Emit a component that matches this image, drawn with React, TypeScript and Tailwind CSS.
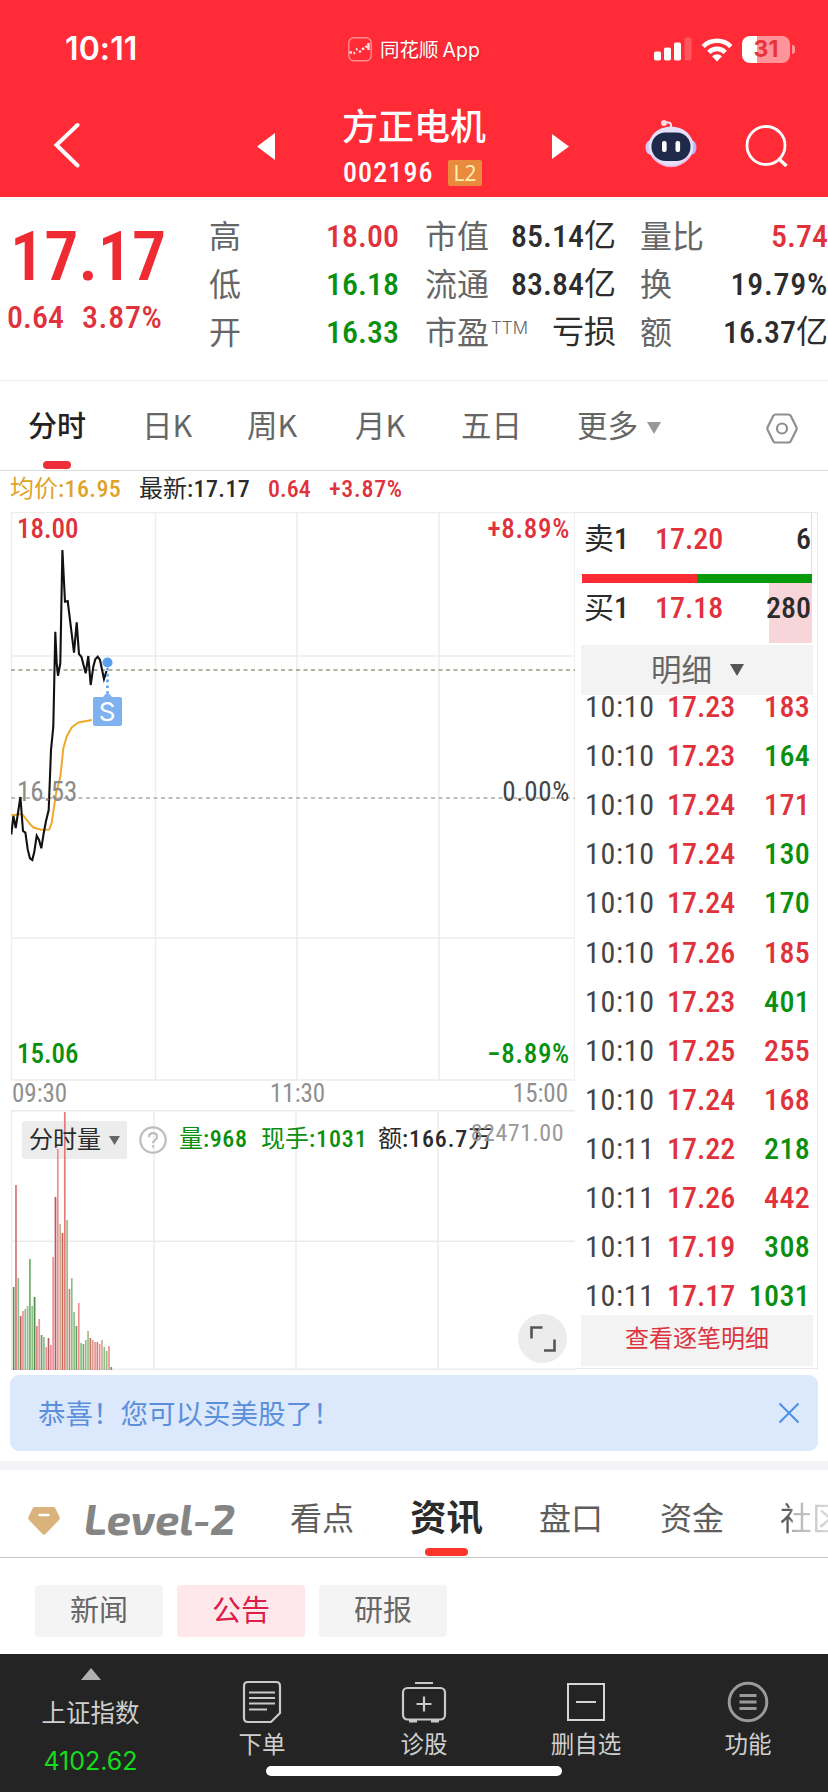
import React from 'react';
import { clsx } from 'clsx';

const RED = 'text-[#e0323c]';
const GREEN = 'text-[#0a8f0e]';

// narrow numerals used for every price / quantity, hanzi inside stay regular weight
function Num({ children, className }: { children: string; className?: string }) {
  return (
    <span
      className={clsx(
        "font-['Roboto','Noto_Sans_CJK_SC',sans-serif] whitespace-nowrap [font-stretch:86%]",
        !className?.includes('font-') && 'font-[470]',
        children.includes('%') && 'tracking-[0.7px]',
        className,
      )}
    >
      {children.split(/([\u4e00-\u9fa5]+)/).map((part, i) =>
        i % 2 ? (
          <span key={i} className="font-normal tracking-normal">
            {part}
          </span>
        ) : (
          part
        ),
      )}
    </span>
  );
}

const quoteRows = [
  [
    { label: '高', value: '18.00', tone: RED },
    { label: '低', value: '16.18', tone: GREEN },
    { label: '开', value: '16.33', tone: GREEN },
  ],
  [
    { label: '市值', value: '85.14亿', tone: 'text-[#2d2d2d]' },
    { label: '流通', value: '83.84亿', tone: 'text-[#2d2d2d]' },
    { label: '市盈', sup: 'TTM', value: '亏损', tone: 'text-[#2d2d2d]' },
  ],
  [
    { label: '量比', value: '5.74', tone: RED },
    { label: '换', value: '19.79%', tone: 'text-[#2d2d2d]' },
    { label: '额', value: '16.37亿', tone: 'text-[#2d2d2d]' },
  ],
];

const trades: [string, string, string, 'up' | 'down'][] = [
  ['10:10', '17.23', '183', 'up'],
  ['10:10', '17.23', '164', 'down'],
  ['10:10', '17.24', '171', 'up'],
  ['10:10', '17.24', '130', 'down'],
  ['10:10', '17.24', '170', 'down'],
  ['10:10', '17.26', '185', 'up'],
  ['10:10', '17.23', '401', 'down'],
  ['10:10', '17.25', '255', 'up'],
  ['10:10', '17.24', '168', 'up'],
  ['10:11', '17.22', '218', 'down'],
  ['10:11', '17.26', '442', 'up'],
  ['10:11', '17.19', '308', 'down'],
  ['10:11', '17.17', '1031', 'down'],
];

// [height, colour] per minute
const R = '#ee8f92';
const G = '#8cc088';
const volumes: [number, string][] = [
  [83, '#5d8f52'], [185, '#d9727a'], [92, G], [54, '#b0605c'], [59, R], [61, G], [64, G],
  [111, '#6fae6d'], [64, G], [73, '#4f8f4c'], [44, '#d98a80'], [51, R], [35, '#6f9a66'], [33, G], [23, R], [32, '#b95f72'],
  [25, R], [113, R], [173, '#c4545c'], [221, R], [146, '#c3b58f'], [137, '#c9635c'], [258, '#e07a7c'],
  [150, '#a9b583'], [81, '#c98474'], [92, G], [58, G], [44, '#6f9a66'], [67, R], [27, G], [26, '#6fae6d'],
  [30, G], [39, '#a9b98a'], [32, '#c07a6a'], [30, '#d0a088'], [28, R], [28, '#e07a7c'], [26, R],
  [30, '#c3b58f'], [23, G], [19, G], [24, R], [3, '#6f9a66'],
];

function StatusBar() {
  return (
    <div className="flex h-[98px] items-center pl-[65px] pr-[33px] text-white">
      <div className="w-[283px] font-['Inter',sans-serif] text-[32px] font-semibold tracking-[0.1px]">10:11</div>
      <div className="flex items-center">
        <svg width="24" height="25" viewBox="0 0 24 25" fill="none">
          <rect x="0.8" y="0.8" width="22.4" height="23" rx="5" stroke="#ff8c90" strokeWidth="1.4" />
          <path d="M1.500 15.500h2.500M5.500 16.500l1.500-1M8 12.500l1.500-.5M11 15l2-1M14 12.500l2-1.500M17.500 10.500l1.500-1.500M20.500 13V6" stroke="#ffe3e3" strokeWidth="2.400" />
        </svg>
        <span className="ml-2 font-['Noto_Sans_CJK_SC',sans-serif] text-[19.500px] leading-6 [text-shadow:1px_1px_2px_#a0202880]">
          同花顺<span className="ml-1 font-['Inter','Noto_Sans_CJK_SC',sans-serif]">App</span>
        </span>
      </div>
      <div className="ml-auto flex items-center">
        <svg width="38" height="24" viewBox="0 0 38 24" fill="#fff">
          <rect x="0" y="14.500" width="7" height="9" rx="1.800" />
          <rect x="10" y="10.500" width="7" height="13" rx="1.800" />
          <rect x="20" y="5.500" width="7" height="18" rx="1.800" />
          <rect x="30.500" y="0.500" width="7" height="23" rx="1.800" opacity="0.2" />
        </svg>
        <svg className="ml-[9px]" width="32" height="25" viewBox="0 0 32 25" fill="none" stroke="#fff">
          <path d="M2.200 9.500a19.500 19.500 0 0 1 27.600 0" strokeWidth="4.600" />
          <path d="M7.800 15.300a11.600 11.600 0 0 1 16.400 0" strokeWidth="4.600" />
          <path d="M16 24.500l-5-5.200a7.200 7.200 0 0 1 10 0z" fill="#fff" stroke="none" />
        </svg>
        <div className="ml-[9px] flex h-[27px] w-[48px] items-center justify-center rounded-[8px] bg-[linear-gradient(90deg,#fff_31%,#ff959a_31%)] font-['Inter',sans-serif] text-[23px] font-bold text-[#e8323c]">
          31
        </div>
        <div className="ml-[2px] h-[9px] w-[3px] rounded-r-full bg-[#ff959a]" />
      </div>
    </div>
  );
}

function Robot() {
  return (
    <svg width="52" height="50" viewBox="0 0 52 50">
      <path d="M26 10V6q0-2.500-3-2.500h-3" fill="none" stroke="#f3dff0" strokeWidth="2" />
      <circle cx="19" cy="4" r="3" fill="#ffd9dc" />
      <ellipse cx="5" cy="28.500" rx="4.500" ry="7" fill="#d9c8f4" />
      <ellipse cx="47" cy="28.500" rx="4.500" ry="7" fill="#b9b4f6" />
      <ellipse cx="26" cy="27.500" rx="22.500" ry="20" fill="#e6e1fb" />
      <path d="M8 38q8 9.500 18 9.500t18-9.500" fill="none" stroke="#f2b6dc" strokeWidth="1.500" />
      <rect x="6.500" y="13.500" width="39" height="28.500" rx="14" fill="#1f2a4b" />
      <rect x="17" y="22" width="4.600" height="11" rx="2" fill="#fff" />
      <rect x="30.500" y="22" width="4.600" height="11" rx="2" fill="#fff" />
    </svg>
  );
}

function NavBar() {
  return (
    <div className="flex h-[99px] items-start text-white">
      <svg className="ml-[53px] mt-[24px]" width="28" height="46" viewBox="0 0 28 46" fill="none">
        <path d="M24.500 3L3.500 23l21 20.500" stroke="#fff" strokeWidth="4" strokeLinecap="round" />
      </svg>
      <svg className="ml-[176px] mt-[35px]" width="18" height="27" viewBox="0 0 18 27">
        <path d="M18 0v27L0 13.500z" fill="#fff" />
      </svg>
      <div className="ml-[67px] w-[145px]">
        <div className="mt-[5px] whitespace-nowrap font-['Noto_Sans_CJK_SC',sans-serif] text-[36px] font-medium leading-[42px]">方正电机</div>
        <div className="mt-[14px] flex h-[28px] items-center">
          <Num className="ml-px text-[28px] leading-7 tracking-[1.100px]">002196</Num>
          <span className="ml-auto mr-[5px] flex h-[26px] w-[34px] items-center justify-center rounded-[2px] bg-[#e98a3c] font-['Noto_Sans',sans-serif] text-[21px] leading-none text-[#ffeeb0]">
            L2
          </span>
        </div>
      </div>
      <svg className="ml-[65px] mt-[36px]" width="17" height="25" viewBox="0 0 17 25">
        <path d="M0 0v25l17-12.500z" fill="#fff" />
      </svg>
      <div className="ml-[76px] mt-[21px]">
        <Robot />
      </div>
      <svg className="ml-[47px] mt-[26px]" width="46" height="44" viewBox="0 0 46 44" fill="none" stroke="#fff" strokeWidth="2.800">
        <circle cx="22" cy="21.500" r="19" />
        <path d="M34.500 34.500l8 7.500" strokeWidth="3.400" />
      </svg>
    </div>
  );
}

function Quote() {
  return (
    <section className="flex h-[184px] border-b border-[#ececec] pt-[15px]">
      <div className="w-[209px]">
        <Num className="ml-[10px] mt-[9px] block text-[68px] font-[650] leading-[72px] text-[#ee2b33]">17.17</Num>
        <div className={clsx('ml-[7px] mt-[5px] flex gap-[18px] text-[32px] leading-[38px]', RED)}>
          <Num>0.64</Num>
          <Num>3.87%</Num>
        </div>
      </div>
      {quoteRows.map((col, i) => (
        <div key={i} className={['w-[190px]', 'ml-[26px] w-[191px]', 'ml-[24px] w-[188px]'][i]}>
          {col.map((r) => (
            <div key={r.label} className="flex h-[48px] items-center justify-between font-['Noto_Sans_CJK_SC',sans-serif] text-[32px] leading-[48px] text-[#666]">
              <span className="mb-[5px] flex whitespace-nowrap">
                {r.label}
                {'sup' in r && <span className="ml-[2px] font-['Inter',sans-serif] text-[17px] font-light leading-[44px]">{r.sup}</span>}
              </span>
              <Num className={r.tone}>{r.value}</Num>
            </div>
          ))}
        </div>
      ))}
    </section>
  );
}

function PeriodTabs() {
  return (
    <div className="flex h-[90px] items-start border-b border-[#dcdcdc] pl-[28px] pt-[21px] font-['Noto_Sans_CJK_SC',sans-serif] text-[30.500px] leading-[44px] text-[#666]">
      <div className="flex w-[114px] flex-col items-start text-[29px] font-medium text-[#222]">
        分时
        <span className="ml-[15px] mt-[15px] h-[8px] w-[28px] rounded-full bg-[#ec2f38]" />
      </div>
      <span className="w-[105px]">日K</span>
      <span className="w-[108px]">周K</span>
      <span className="w-[106px]">月K</span>
      <span className="w-[116px]">五日</span>
      <span className="w-[70px]">更多</span>
      <svg className="mt-[20px]" width="14" height="12" viewBox="0 0 14 12">
        <path d="M0 0h14L7 12z" fill="#999" />
      </svg>
      <svg className="ml-[105px] mt-[11px]" width="32" height="31" viewBox="0 0 32 31" fill="none" stroke="#8f8f8f" strokeWidth="2.200">
        <path d="M9.500 1.500h13q1.500 0 2.200 1.300l5.600 11.200q.7 1.500 0 3l-5.600 11.200q-.7 1.300-2.200 1.300h-13q-1.500 0-2.200-1.300L1.700 17q-.7-1.500 0-3L7.300 2.800q.7-1.300 2.200-1.300z" />
        <circle cx="16" cy="15.500" r="5" />
      </svg>
    </div>
  );
}

function PriceChart() {
  return (
    <div className="relative h-[569px] text-[27px] leading-[30px]">
      <svg width="564" height="569" viewBox="11 512 564 569" fill="none">
        <g stroke="#ededed" strokeWidth="1.500">
          <path d="M11 512.500H575V1080H11.500V512.500M155.500 512V1080M297 512V1080M439 512V1080M11 656H575M11 938H575" />
        </g>
        <path d="M11 670H575" stroke="#9b9a88" strokeWidth="1.500" strokeDasharray="4 3.500" />
        <path d="M11 798H575" stroke="#ababab" strokeWidth="1.300" strokeDasharray="4 3.500" />
        <path
          d="M11.500 815l4 0 4.800-1 2.700 1 7 9 3.500 3.500 8 2.200 7.700-.2 2.500-6.500L56 793.500 60.300 777l3-28.500 3.400-12 5-9 6.600-5L92 720"
          stroke="#f0a92c"
          strokeWidth="2"
        />
        <path
          d="M11.300 834.500L13.400 816l2.300 12L20.400 797l2.600 34 2.400 1.700 2.300 16.700 2.300 9 2.300 1.600 2-8.300 2.400-16 2.300 4.300 2.300 8.300 2.400-15L46 821l2.700-11L51 750l2.300-23.300 2-95 1.400 31.600 1.300 12.400 2.300-12.400L62.400 550 65 601.700l2.700-.7L74 652.700l2.700-30.400L79 654l2.400 2.700 4.300 16.600 2.600-17.300 2.400 29 2.600-18.300 2-7.400 2.400-2.600 2.300 3.300L104 679l2.500-8"
          stroke="#111"
          strokeWidth="2.100"
        />
        <circle cx="107.500" cy="662.500" r="5" fill="#5b9fee" />
        <path d="M107.500 668v25" stroke="#5b9fee" strokeWidth="2.600" strokeDasharray="2.600 3.200" />
        <path d="M95 697h8l4.500-5 4.500 5h8q2 0 2 2v25q0 2-2 2H95q-2 0-2-2v-25q0-2 2-2z" fill="#7fb1f1" />
      </svg>
      <span className="absolute left-[82px] top-[185px] w-[28px] text-center font-['Inter',sans-serif] text-[26px] leading-[30px] text-white">S</span>
      <Num className={clsx('absolute left-[6px] top-[2px]', RED)}>18.00</Num>
      <Num className={clsx('absolute right-[5px] top-[2px]', RED)}>+8.89%</Num>
      <Num className="absolute left-[6px] top-[265px] font-normal text-[#8c8c8c]">16.53</Num>
      <Num className="absolute right-[5px] top-[265px] font-normal text-[#444]">0.00%</Num>
      <Num className={clsx('absolute left-[6px] top-[527px]', GREEN)}>15.06</Num>
      <Num className={clsx('absolute right-[5px] top-[527px]', GREEN)}>−8.89%</Num>
    </div>
  );
}

function VolumeChart() {
  return (
    <div className="relative h-[260px]">
      <svg width="564" height="260" viewBox="0 0 564 260" fill="none">
        <path d="M0 .8H564M.5 0V259.300H564M143 0V259M285 0V259M427 0V259M0 131.300H564" stroke="#ebebeb" strokeWidth="1.500" />
        <rect x="11" y="11" width="105" height="38" rx="3" fill="#ececec" />
        {volumes.map(([h, c], i) => (
          <rect key={i} x={1.8 + i * 2.325} y={260 - h} width="1.700" height={h} fill={c} />
        ))}
      </svg>
      <div className="absolute inset-x-0 top-[10px] flex h-[38px] items-center whitespace-nowrap font-['Noto_Sans_CJK_SC',sans-serif] text-[24px] leading-[38px]">
        <span className="ml-[18px] w-[73px] pb-[2px] text-[#2b2b2b]">分时量</span>
        <svg className="ml-[7px] mt-[2px]" width="11" height="9" viewBox="0 0 11 9">
          <path d="M0 0h11L5.500 9z" fill="#666" />
        </svg>
        <svg className="ml-[19px] mt-[2px]" width="28" height="28" viewBox="0 0 28 28" fill="none" stroke="#bdbdbd" strokeWidth="2.200">
          <circle cx="14" cy="14" r="12.700" />
          <path d="M10 11.200q0-4 4-4t4 3.700q0 2-2 3.200t-2 3.200M14 19.200v2.400" />
        </svg>
        <Num className={clsx('ml-[12px] w-[82px] tracking-[0.6px]', GREEN)}>量:968</Num>
        <Num className={clsx('w-[117px] tracking-[0.9px]', GREEN)}>现手:1031</Num>
        <Num className="tracking-[0.9px] text-[#2b2b2b]">额:166.7万</Num>
      </div>
      <Num className="absolute right-[11px] top-[8px] text-[24px] font-normal leading-[30px] tracking-[0.5px] text-[#999]">82471.00</Num>
      <div className="absolute right-[8px] top-[204px] flex size-[49px] items-center justify-center rounded-full bg-[#ececec]">
        <svg width="26" height="26" viewBox="0 0 26 26" fill="none" stroke="#555" strokeWidth="2.600">
          <path d="M1.500 12.500V1.500h11M14 24.500h10.500v-11" />
        </svg>
      </div>
    </div>
  );
}

function OrderBook() {
  return (
    <div className="h-[857px] w-[243px] border-r border-t border-b border-[#e8e8e8] pl-[6px] text-[30px]">
      <div className="mr-[5px] flex h-[61px] items-center border-r border-[#ddd] pb-[11px] pl-[3px] text-[#2b2b2b]">
        <Num className="w-[71px]">卖1</Num>
        <Num className={RED}>17.20</Num>
        <Num className="ml-auto">6</Num>
      </div>
      <div className="ml-px mr-[5px] flex h-[9px]">
        <div className="w-[115px] bg-[#fb2a33]" />
        <div className="flex-1 bg-[#079a0a]" />
      </div>
      <div className="mr-[5px] flex h-[60px] items-center bg-[linear-gradient(90deg,transparent_188px,#f8d5d8_188px)] pb-[12px] pl-[3px] text-[#2b2b2b]">
        <Num className="w-[71px]">买1</Num>
        <Num className={RED}>17.18</Num>
        <Num className="ml-auto mr-px">280</Num>
      </div>
      <div className="mr-[4px] mt-[2px] flex h-[50px] items-center justify-center bg-[#f3f3f3] pl-[1px] font-['Noto_Sans_CJK_SC',sans-serif] text-[30.500px] leading-[44px] text-[#666]">
        <span className="pb-[5px]">明细</span>
        <svg className="ml-[18px]" width="14" height="12" viewBox="0 0 14 12">
          <path d="M0 0h14L7 12z" fill="#555" />
        </svg>
      </div>
      <div className="-mt-[13px] ml-[4px] mr-[7px]">
        {trades.map(([time, price, qty, dir], i) => (
          <div key={i} className="flex h-[49.100px] items-center leading-[49px]">
            <Num className="w-[82px] font-normal tracking-[0.7px] text-[#444]">{time}</Num>
            <Num className={RED}>{price}</Num>
            <Num className={clsx('ml-auto tracking-[0.3px]', dir === 'up' ? RED : GREEN)}>{qty}</Num>
          </div>
        ))}
      </div>
      <div className="-mt-[5px] mr-[4px] flex h-[51px] items-center justify-center bg-[#f3f3f3] pb-[8px] font-['Noto_Sans_CJK_SC',sans-serif] text-[24px] text-[#dc3540]">
        查看逐笔明细
      </div>
    </div>
  );
}

function Market() {
  return (
    <section className="h-[904px]">
      <div className="flex h-[41px] items-center pb-[5px] pl-[10px] text-[24px] leading-[36px]">
        <Num className="w-[129px] tracking-[0.4px] text-[#dfa32a]">均价:16.95</Num>
        <Num className="w-[129px] tracking-[0.4px] text-[#2b2b2b]">最新:17.17</Num>
        <Num className={clsx('w-[61px]', RED)}>0.64</Num>
        <Num className={RED}>+3.87%</Num>
      </div>
      <div className="flex pl-[11px]">
        <div className="w-[564px]">
          <PriceChart />
          <div className="flex h-[29px] items-center pb-[4px] pl-px text-[25px] leading-[25px] text-[#8f8f8f]">
            <Num className="w-[258px] font-normal">09:30</Num>
            <Num className="font-normal">11:30</Num>
            <Num className="ml-auto mr-[7px] font-normal">15:00</Num>
          </div>
          <VolumeChart />
        </div>
        <OrderBook />
      </div>
    </section>
  );
}

function Notice() {
  return (
    <div className="mx-[10px] flex h-[76px] items-center rounded-[9px] bg-[#dce8fb] pl-[28px] pr-[18px] font-['Noto_Sans_CJK_SC',sans-serif] text-[27.500px] text-[#5b8fdc]">
      <span className="pb-px">恭喜！您可以买美股了！</span>
      <svg className="ml-auto" width="22" height="22" viewBox="0 0 22 22" stroke="#4b90e6" strokeWidth="2">
        <path d="M1.500 1.500l19 19M20.500 1.500l-19 19" />
      </svg>
    </div>
  );
}

function NewsTabs() {
  return (
    <div className="flex h-[88px] items-start overflow-hidden whitespace-nowrap border-b border-[#c4c8c4] pl-[28px] pt-[22px] font-['Noto_Sans_CJK_SC',sans-serif] text-[32px] leading-[48px] text-[#5e5e5e]">
      <svg className="mt-[15px] shrink-0" width="32" height="28" viewBox="0 0 32 28">
        <path d="M7 0h18q1.500 0 2.300 1.200L31.500 10q.8 1.500-.3 2.700L17.500 27q-1.500 1.500-3 0L.8 12.700Q-.3 11.500.5 10L4.700 1.200Q5.500 0 7 0z" fill="#d9b27c" />
        <path d="M11.500 8h9" stroke="#fff" strokeWidth="2.400" strokeLinecap="round" />
      </svg>
      <span className="ml-[24px] mt-[2px] w-[206px] shrink-0 font-['Exo_2','Open_Sans',sans-serif] text-[43px] font-bold italic text-[#858585]">Level-2</span>
      <span className="w-[120px] shrink-0">看点</span>
      <span className="flex w-[129px] shrink-0 flex-col text-[36.500px] font-bold text-[#2b2b2b]">
        资讯
        <span className="ml-[15px] mt-[8px] h-[8px] w-[43px] rounded-full bg-[#fa352c]" />
      </span>
      <span className="w-[121px] shrink-0">盘口</span>
      <span className="w-[120px] shrink-0">资金</span>
      <span className="shrink-0 bg-[linear-gradient(90deg,#5e5e5e_10px,#b5b5b5_14px,#d8d8d8_48px)] bg-clip-text text-transparent">社区</span>
    </div>
  );
}

function Filters() {
  const items = ['新闻', '公告', '研报'];
  return (
    <div className="flex h-[96px] gap-[14px] pl-[35px] pt-[27px] font-['Noto_Sans_CJK_SC',sans-serif] text-[29px]">
      {items.map((t) => (
        <div
          key={t}
          className={clsx(
            'flex h-[52px] w-[128px] items-center justify-center rounded-[4px] pb-[4px]',
            t === '公告' ? 'bg-[#ffe8ec] text-[#dc1f48]' : 'bg-[#f4f4f4] text-[#666]',
          )}
        >
          {t}
        </div>
      ))}
    </div>
  );
}

const actions = [
  {
    label: '下单',
    icon: (
      <svg width="40" height="44" viewBox="0 0 40 44" fill="none" stroke="#c9c9c9" strokeWidth="2.200">
        <path d="M6 2h28q4 0 4 4v27l-9 9H6q-4 0-4-4V6q0-4 4-4z" />
        <path d="M7 12.500h26M7 18h26M7 23.500h26M7 29.500h18" />
      </svg>
    ),
  },
  {
    label: '诊股',
    icon: (
      <svg width="46" height="44" viewBox="0 0 46 44" fill="none" stroke="#c9c9c9" strokeWidth="2.200">
        <rect x="2" y="8" width="42" height="31.500" rx="4.500" />
        <path d="M14 3h18M15.500 24h15M23 16.500v15" />
        <path d="M8 41h8M30 41h8" strokeWidth="3" />
      </svg>
    ),
  },
  {
    label: '删自选',
    icon: (
      <svg width="38" height="44" viewBox="0 0 38 44" fill="none" stroke="#d4d4d4" strokeWidth="2">
        <rect x="1" y="4" width="36" height="36" />
        <path d="M9 22h20" />
      </svg>
    ),
  },
  {
    label: '功能',
    icon: (
      <svg width="42" height="44" viewBox="0 0 42 44" fill="none" stroke="#9a9a9a" strokeWidth="3">
        <circle cx="21" cy="22" r="18.800" />
        <path d="M12.500 15.500h17M12.500 22h17M12.500 28.500h17" />
      </svg>
    ),
  },
];

function BottomBar() {
  return (
    <div className="relative flex h-[138px] bg-[#242424] font-['Noto_Sans_CJK_SC',sans-serif] text-[#cfcfcf]">
      <div className="flex w-[181px] shrink-0 flex-col items-center pt-[14px]">
        <svg width="20" height="12" viewBox="0 0 20 12">
          <path d="M0 12h20L10 0z" fill="#b0b0b0" />
        </svg>
        <span className="mt-[15px] text-[24.500px] leading-[34px]">上证指数</span>
        <span className="mt-[15px] font-['Inter',sans-serif] text-[25px] leading-[34px] text-[#15dc1c]">4102.62</span>
      </div>
      {actions.map((a) => (
        <div key={a.label} className="flex w-[162px] shrink-0 flex-col items-center pt-[26px] text-[23.500px] leading-[34px]">
          {a.icon}
          <span className="mt-[2px]">{a.label}</span>
        </div>
      ))}
      <div className="absolute bottom-[16px] left-[266px] h-[10px] w-[296px] rounded-full bg-white" />
    </div>
  );
}

export default function App() {
  return (
    <div className="h-[1792px] w-[828px] overflow-hidden bg-white">
      <header className="h-[197px] bg-[#ff2b36]">
        <StatusBar />
        <NavBar />
      </header>
      <Quote />
      <PeriodTabs />
      <Market />
      <Notice />
      <div className="mt-[10px] h-[9px] bg-[#f3f3f8]" />
      <NewsTabs />
      <Filters />
      <BottomBar />
    </div>
  );
}
